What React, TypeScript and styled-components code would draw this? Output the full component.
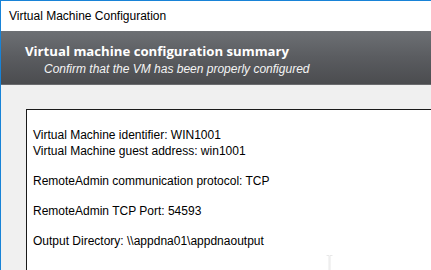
import * as React from 'react';
import styled, { createGlobalStyle } from 'styled-components';

const GlobalStyle = createGlobalStyle`
	html, body {
		margin: 0;
		padding: 0;
		background: #f0f0f0;
		overflow: hidden;
	}
`;

const Window = styled.div`
	width: 431px;
	height: 270px;
	display: flex;
	flex-direction: column;
	border-top: 1px solid #1883d7;
	border-left: 1px solid #1883d7;
	box-sizing: border-box;
	background: #f0f0f0;
	overflow: hidden;
	font-family: 'Liberation Sans', Arial, sans-serif;
`;

const TitleBar = styled.div`
	height: 30px;
	flex-shrink: 0;
	background: #ffffff;
	display: flex;
	align-items: center;
	padding-left: 8px;
	font-size: 12px;
	color: #000;
`;

const Header = styled.div`
	height: 54px;
	flex-shrink: 0;
	background: linear-gradient(to bottom, #6d7074 0%, #5a5c60 50%, #4b4c4f 100%);
	border-bottom: 1px solid #6a6b6e;
	display: flex;
	flex-direction: column;
	padding: 11px 0 0 24px;
	box-sizing: border-box;
	color: #fff;
`;

const HeaderTitle = styled.div`
	font-family: 'Open Sans', 'Noto Sans', sans-serif;
	font-weight: bold;
	font-size: 13.2px;
	line-height: 19px;
`;

const HeaderSubtitle = styled.div`
	font-style: italic;
	font-size: 12px;
	line-height: 16px;
	padding-left: 19px;
	color: #f4f4f4;
`;

const Body = styled.div`
	flex: 1;
	padding: 24px 0 0 25px;
	display: flex;
`;

const SummaryBox = styled.div`
	flex: 1;
	background: #fff;
	border: 1px solid #1a1a1a;
	border-right: none;
	border-bottom: none;
	padding: 17px 0 0 6px;
	font-size: 12px;
	color: #000;
	position: relative;
`;

const Line = styled.div<{ $gap?: number }>`
	line-height: 16px;
	margin-top: ${p => p.$gap ?? 0}px;
	white-space: nowrap;
`;

const Cursor = styled.svg`
	position: absolute;
	left: 299px;
	top: 145px;
`;

const lines: { text: string; gap: number }[] = [
	{ text: 'Virtual Machine identifier: WIN1001', gap: 0 },
	{ text: 'Virtual Machine guest address: win1001', gap: 0 },
	{ text: 'RemoteAdmin communication protocol: TCP', gap: 14 },
	{ text: 'RemoteAdmin TCP Port: 54593', gap: 14 },
	{ text: 'Output Directory: \\\\appdna01\\appdnaoutput', gap: 14 },
];

const App: React.FC = () => {
	return (
		<>
			<GlobalStyle />
			<Window>
				<TitleBar>Virtual Machine Configuration</TitleBar>
				<Header>
					<HeaderTitle>Virtual machine configuration summary</HeaderTitle>
					<HeaderSubtitle>Confirm that the VM has been properly configured</HeaderSubtitle>
				</Header>
				<Body>
					<SummaryBox>
						{lines.map(l => (
							<Line key={l.text} $gap={l.gap}>
								{l.text}
							</Line>
						))}
						<Cursor width="7" height="16" viewBox="0 0 7 16">
							<path d="M0.5 0.5h2.5v15h-2.5M6.5 0.5h-2.5v15h2.5" fill="none" stroke="#e8e8e8" strokeWidth="1" />
						</Cursor>
					</SummaryBox>
				</Body>
			</Window>
		</>
	);
};

export default App;
